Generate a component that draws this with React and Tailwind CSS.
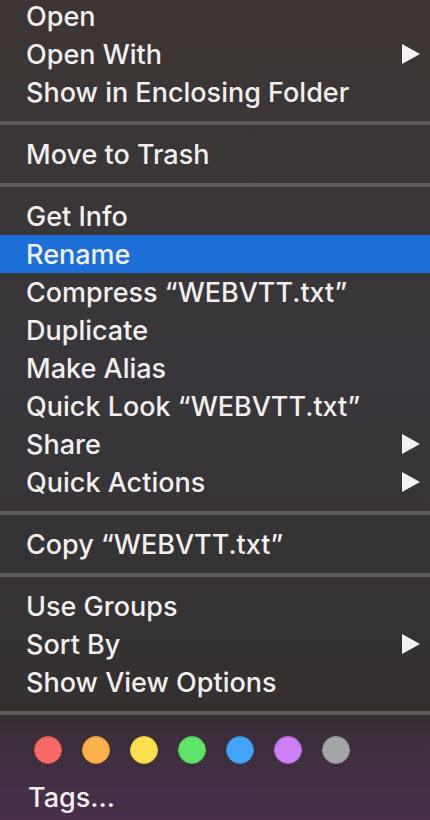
import React from 'react'

const Arrow = () => (
  <svg width="18" height="20" viewBox="0 0 18 20" className="shrink-0">
    <polygon points="0,0 18,10 0,20" fill="#f2f2f2" />
  </svg>
)

const Item = ({ label, sub, active }) => (
  <div
    className={`flex h-[38px] items-center justify-between pl-[26px] pr-[10px] ${
      active ? 'bg-[#1b6fd7]' : ''
    }`}
  >
    <span className="whitespace-nowrap pt-[2px]">{label}</span>
    {sub && <Arrow />}
  </div>
)

// padding instead of margin so it never collapses into neighbours
const Sep = () => (
  <div className="py-[10px]">
    <div className="h-[4px] bg-[#5f5a59]" />
  </div>
)

const tags = [
  ['bg-[#f86967]', 'border-[#e24d4b]'],
  ['bg-[#f9b24c]', 'border-[#e99a32]'],
  ['bg-[#fde04f]', 'border-[#ecc83a]'],
  ['bg-[#5fe36b]', 'border-[#43cc51]'],
  ['bg-[#46a3fa]', 'border-[#2e88e4]'],
  ['bg-[#cc80f3]', 'border-[#b466dd]'],
  ['bg-[#a5a4a9]', 'border-[#8f8e93]'],
]

export default function App() {
  return (
    <div
      className="h-[820px] w-[430px] overflow-hidden bg-[linear-gradient(to_bottom,#3c3533_0%,#38363a_45%,#33302f_86%,#3a2f39_89%,#482e49_100%)] text-[27px] font-medium text-[#f1efef]"
      style={{ fontFamily: 'Inter, "Liberation Sans", sans-serif' }}
    >
      <div className="mt-[-3px]">
        <Item label="Open" />
        <Item label="Open With" sub />
        <Item label="Show in Enclosing Folder" />
        <Sep />
        <Item label="Move to Trash" />
        <Sep />
        <Item label="Get Info" />
        <Item label="Rename" active />
        <Item label="Compress “WEBVTT.txt”" />
        <Item label="Duplicate" />
        <Item label="Make Alias" />
        <Item label="Quick Look “WEBVTT.txt”" />
        <Item label="Share" sub />
        <Item label="Quick Actions" sub />
        <Sep />
        <Item label="Copy “WEBVTT.txt”" />
        <Sep />
        <Item label="Use Groups" />
        <Item label="Sort By" sub />
        <Item label="Show View Options" />
        <Sep />
        <div className="mt-[11px] flex gap-[20px] pl-[34px]">
          {tags.map(([bg, border], i) => (
            <div key={i} className={`h-[28px] w-[28px] rounded-full border ${bg} ${border}`} />
          ))}
        </div>
        <div className="mt-[14px] flex h-[38px] items-center pl-[28px] pt-[2px]">Tags...</div>
      </div>
    </div>
  )
}
